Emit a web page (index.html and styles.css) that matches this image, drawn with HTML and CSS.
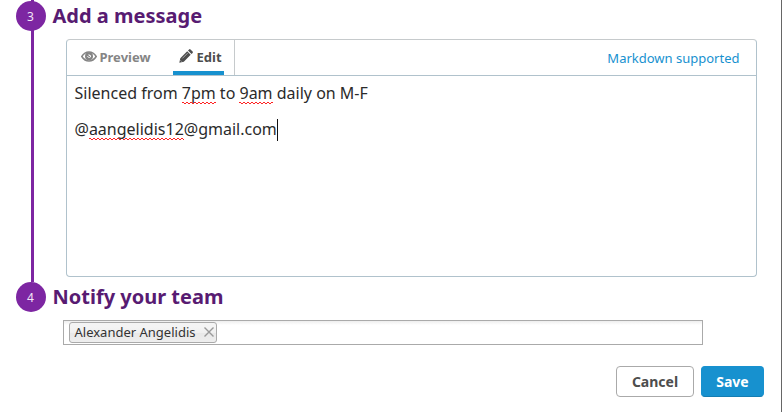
FILE: index.html
```html
<!DOCTYPE html>
<html lang="en">
<head>
<meta charset="utf-8">
<title>Silence monitor</title>
<link rel="stylesheet" href="styles.css">
</head>
<body>
<main class="panel">
  <section class="step step-message">
    <div class="rail"><span class="number">3</span></div>
    <div class="content">
      <h2>Add a message</h2>
      <div class="editor">
        <div class="toolbar">
          <div class="tabs">
            <a class="tab preview"><svg class="eye" viewBox="0 0 16 11"><path d="M.8 5.500C4.500-.5 11.500-.5 15.200 5.500 11.500 11.500 4.500 11.500.8 5.500Z" fill="none" stroke="currentColor" stroke-width="1.500"/><circle cx="8" cy="5.200" r="4" fill="currentColor"/><path d="M6.500 5A1.800 1.800 0 0 0 9.500 6V4.500H8V3.200" fill="none" stroke="#fff" stroke-width=".9"/></svg>Preview</a>
            <a class="tab edit"><svg class="pencil" viewBox="0 0 14 14"><path d="M.3 13.700 1.300 9.200 8.200 2.300 11.700 5.800 4.800 12.700Z M9 1.500 10.100.4Q10.800-.2 11.500.4L13.600 2.500Q14.200 3.200 13.600 3.900L12.500 5Z" fill="currentColor"/><path d="M3.400 9.400 8.700 4.100M1.500 11.400 2.700 12.600" stroke="#fff" stroke-width=".5"/></svg>Edit</a>
          </div>
          <a class="help">Markdown supported</a>
        </div>
        <div class="text">
          <p>Silenced from <span class="misspelt">7pm</span> to <span class="misspelt">9am</span> daily on M-F</p>
          <p>@<span class="misspelt">aangelidis12</span>@gmail.com<span class="caret"></span></p>
        </div>
      </div>
    </div>
  </section>
  <section class="step">
    <div class="rail last"><span class="number">4</span></div>
    <div class="content">
      <h2>Notify your team</h2>
      <div class="recipients">
        <span class="token">Alexander Angelidis<svg viewBox="0 0 10 10"><path d="M.5.5l9 9M9.500.5l-9 9" stroke="#999" stroke-width="1.400"/></svg></span>
      </div>
    </div>
  </section>
  <div class="actions">
    <button class="button">Cancel</button>
    <button class="button save">Save</button>
  </div>
</main>
</body>
</html>
```
FILE: styles.css
```css
* { box-sizing: border-box; }
body {
  margin: 0;
  background: #fff;
  color: #2b2b2b;
  font-family: "Noto Sans", sans-serif;
}
.panel {
  height: 412px;
  padding: 0 17px 0 16px;
  border-right: 1px solid #666;
  overflow: hidden;
}
.step { display: flex; }
.step-message { height: 282px; }
.step-message .number,
.step-message h2 { margin-top: 1px; }
.rail {
  width: 30px;
  margin-right: 6.500px;
  background: linear-gradient(#7d26a2, #7d26a2) 15px 0 / 3px 100% no-repeat;
}
.rail.last { background: none; }
.number {
  display: block;
  height: 30px;
  padding-right: 1px;
  border-radius: 50%;
  background: #7d26a2;
  color: #f3e6f8;
  font-size: 12px;
  line-height: 31px;
  text-align: center;
}
.content { flex: 1; }
h2 {
  margin: 0;
  color: #581b72;
  font-size: 20px;
  font-weight: 700;
  line-height: 30px;
}
.editor {
  width: 691px;
  height: 238px;
  margin: 8px 0 0 13.500px;
  border: 1px solid #b0c2cc;
  border-top-color: #c6cacc;
  border-radius: 4px;
}
.toolbar {
  display: flex;
  justify-content: space-between;
  height: 36px;
  border-bottom: 1px solid #b0c2cc;
}
.tabs {
  display: flex;
  gap: 14px;
  padding: 0 10px 0 6px;
  border-right: 1px solid #c6cacc;
}
.tab {
  display: flex;
  align-items: center;
  padding-top: 2px;
  font-size: 13px;
  font-weight: 700;
  border-bottom: 4px solid transparent;
}
.preview { width: 86px; padding-left: 8px; color: #858585; }
.edit { width: 51px; padding-left: 6px; color: #4d4d4d; border-color: #1791cf; }
.eye { width: 16px; height: 11px; margin: -1px 2.500px 0 0; }
.pencil { width: 14px; height: 14px; margin: -1px 3.500px 0 0; }
.help {
  padding-right: 16.500px;
  color: #1791cf;
  font-size: 13px;
  line-height: 37px;
}
.text { margin-top: -1px; padding: 0 7.500px; font-size: 16px; line-height: 36px; }
.text p { margin: 0; }
.misspelt {
  background:
    linear-gradient(45deg, transparent 35%, #f22 35% 65%, transparent 65%) 0 100% / 4px 2px repeat-x,
    linear-gradient(-45deg, transparent 35%, #f22 35% 65%, transparent 65%) 2px 100% / 4px 2px repeat-x;
}
.caret {
  display: inline-block;
  width: 1px;
  height: 22px;
  margin-left: .5px;
  background: #111;
  vertical-align: -6px;
}
.recipients {
  display: flex;
  width: 640px;
  height: 25px;
  margin: 8px 0 0 10.500px;
  padding: 1px 5px;
  border: 1px solid #aaa;
  background: linear-gradient(#eee, #fff 4px);
}
.token {
  display: flex;
  align-items: center;
  gap: 8.500px;
  width: 148px;
  height: 21px;
  padding-left: 4.500px;
  border: 1px solid #aaa;
  border-radius: 3px;
  background: linear-gradient(#f4f4f4 20%, #f0f0f0 50%, #e8e8e8 52%, #eee);
  color: #333;
  font-size: 13px;
  line-height: 19px;
  white-space: nowrap;
}
.token svg { flex: none; width: 10px; height: 10px; margin-top: -2px; }
.actions {
  display: flex;
  justify-content: flex-end;
  gap: 7px;
  margin-top: 21px;
}
.button {
  width: 78px;
  height: 31px;
  padding: 0;
  border: 1px solid #aaa;
  border-radius: 4px;
  background: #fff;
  color: #4d4d4d;
  font: 700 14px "Noto Sans", sans-serif;
}
.save {
  width: 63px;
  border-color: #1791cf #1791cf #147db2;
  background: #1791cf;
  color: #fff;
}
```
